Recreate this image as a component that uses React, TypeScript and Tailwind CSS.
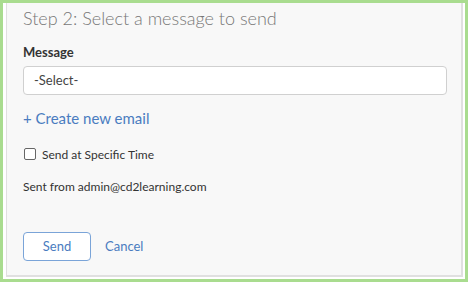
export default function App() {
  return (
    <div className="w-[468px] h-[282px] bg-white border-[3px] border-[#a9dc8f] pl-[3px] pr-[2px] pb-[2px] box-border" style={{ fontFamily: "Lato, 'Open Sans', sans-serif" }}>
      <div className="h-full bg-[#f8f8f8] border-l border-r-2 border-b-2 border-[#e0e0e0] pl-[16px] pr-[14px] flex flex-col">
        <div className="text-[18px] font-light text-[#777] leading-none mt-[6px]">Step 2: Select a message to send</div>
        <div className="text-[13px] font-bold text-[#333] mt-[19px] leading-none">Message</div>
        <div className="mt-[7px] h-[29px] bg-white border border-[#d0d0d0] rounded-[4px] flex items-center pl-[10px] text-[13px] text-[#444]">-Select-</div>
        <div className="mt-[16px] text-[15px] text-[#4a7cc0] leading-none">+ Create new email</div>
        <div className="mt-[21px] flex items-center gap-[6px]">
          <div className="w-[12px] h-[12px] border border-[#666] rounded-[2px] bg-white ml-[1px]"></div>
          <span className="text-[12px] text-[#333] leading-none mt-[2px]">Send at Specific Time</span>
        </div>
        <div className="mt-[20px] text-[12px] text-[#333] leading-none">Sent from admin@cd2learning.com</div>
        <div className="mt-[39px] flex items-center gap-[14px]">
          <div className="w-[68px] h-[29px] border border-[#7aa4d8] rounded-[4px] flex items-center justify-center text-[13px] text-[#4a7cc0] bg-white">Send</div>
          <span className="text-[13px] text-[#4a7cc0]">Cancel</span>
        </div>
      </div>
    </div>
  );
}
